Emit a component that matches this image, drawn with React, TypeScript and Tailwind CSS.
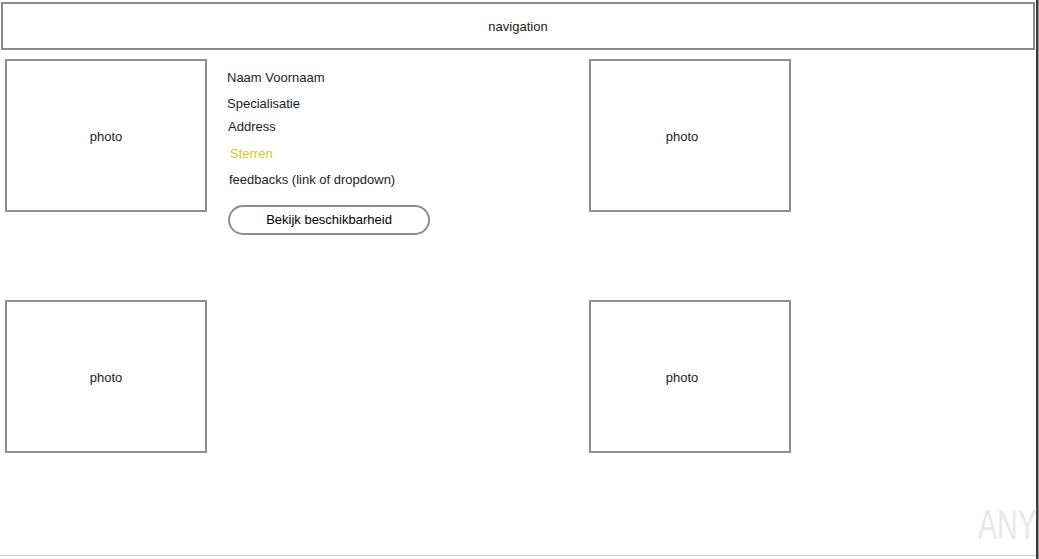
import React from 'react';

const Photo: React.FC<{ shift?: boolean }> = ({ shift }) => (
    <div
        className={
            shift
                ? 'w-[202px] h-[153px] shrink-0 border-2 border-[#8e8e8e] flex items-center justify-center pt-[2px] pr-[16px] text-[13px] text-[#222]'
                : 'w-[202px] h-[153px] shrink-0 border-2 border-[#8e8e8e] flex items-center justify-center pt-[2px] text-[13px] text-[#222]'
        }
    >
        photo
    </div>
);

const App: React.FC = () => {
    return (
        <div className="w-[1039px] h-[559px] bg-white flex overflow-hidden font-['Liberation_Sans',Arial,sans-serif] text-[#222]">
            <div className="relative w-[1036px] h-full flex flex-col">
                <div className="pt-[2px] pl-[1px]">
                    <div className="w-[1034px] h-[48px] border-2 border-[#8a8a8a] flex items-center justify-center pt-[2px] text-[13px]">
                        navigation
                    </div>
                </div>

                <div className="flex items-start h-[153px] mt-[9px] pl-[5px]">
                    <Photo />
                    <div className="w-[382px] shrink-0 pl-[20px] pt-[6px] flex flex-col text-[13px]">
                        <div className="h-[26px] leading-[26px]">Naam Voornaam</div>
                        <div className="h-[24px] leading-[26px]">Specialisatie</div>
                        <div className="h-[26px] leading-[24px] pl-[1px]">Address</div>
                        <div className="h-[26px] leading-[26px] pl-[3px] text-[#d3c92a]">Sterren</div>
                        <div className="h-[26px] leading-[26px] pl-[2px]">feedbacks (link of dropdown)</div>
                        <button className="mt-[12px] ml-[1px] w-[202px] h-[30px] rounded-full border-2 border-[#8e8e8e] bg-white text-[13px] text-black flex items-center justify-center">
                            Bekijk beschikbarheid
                        </button>
                    </div>
                    <Photo shift />
                </div>

                <div className="flex mt-[88px] pl-[5px]">
                    <Photo />
                    <div className="w-[382px] shrink-0" />
                    <Photo shift />
                </div>

                <div className="mt-auto mb-[3px] h-px bg-[#cfcfcf]" />

                <div className="absolute left-[978px] top-[504px] text-[42px] leading-none text-[#e8e8e8] scale-x-[0.68] origin-left select-none">
                    ANY
                </div>
            </div>
            <div className="w-[2px] h-full bg-[#3c3c3c]" />
            <div className="w-px h-full bg-[#9a9a9a]" />
        </div>
    );
};

export default App;
